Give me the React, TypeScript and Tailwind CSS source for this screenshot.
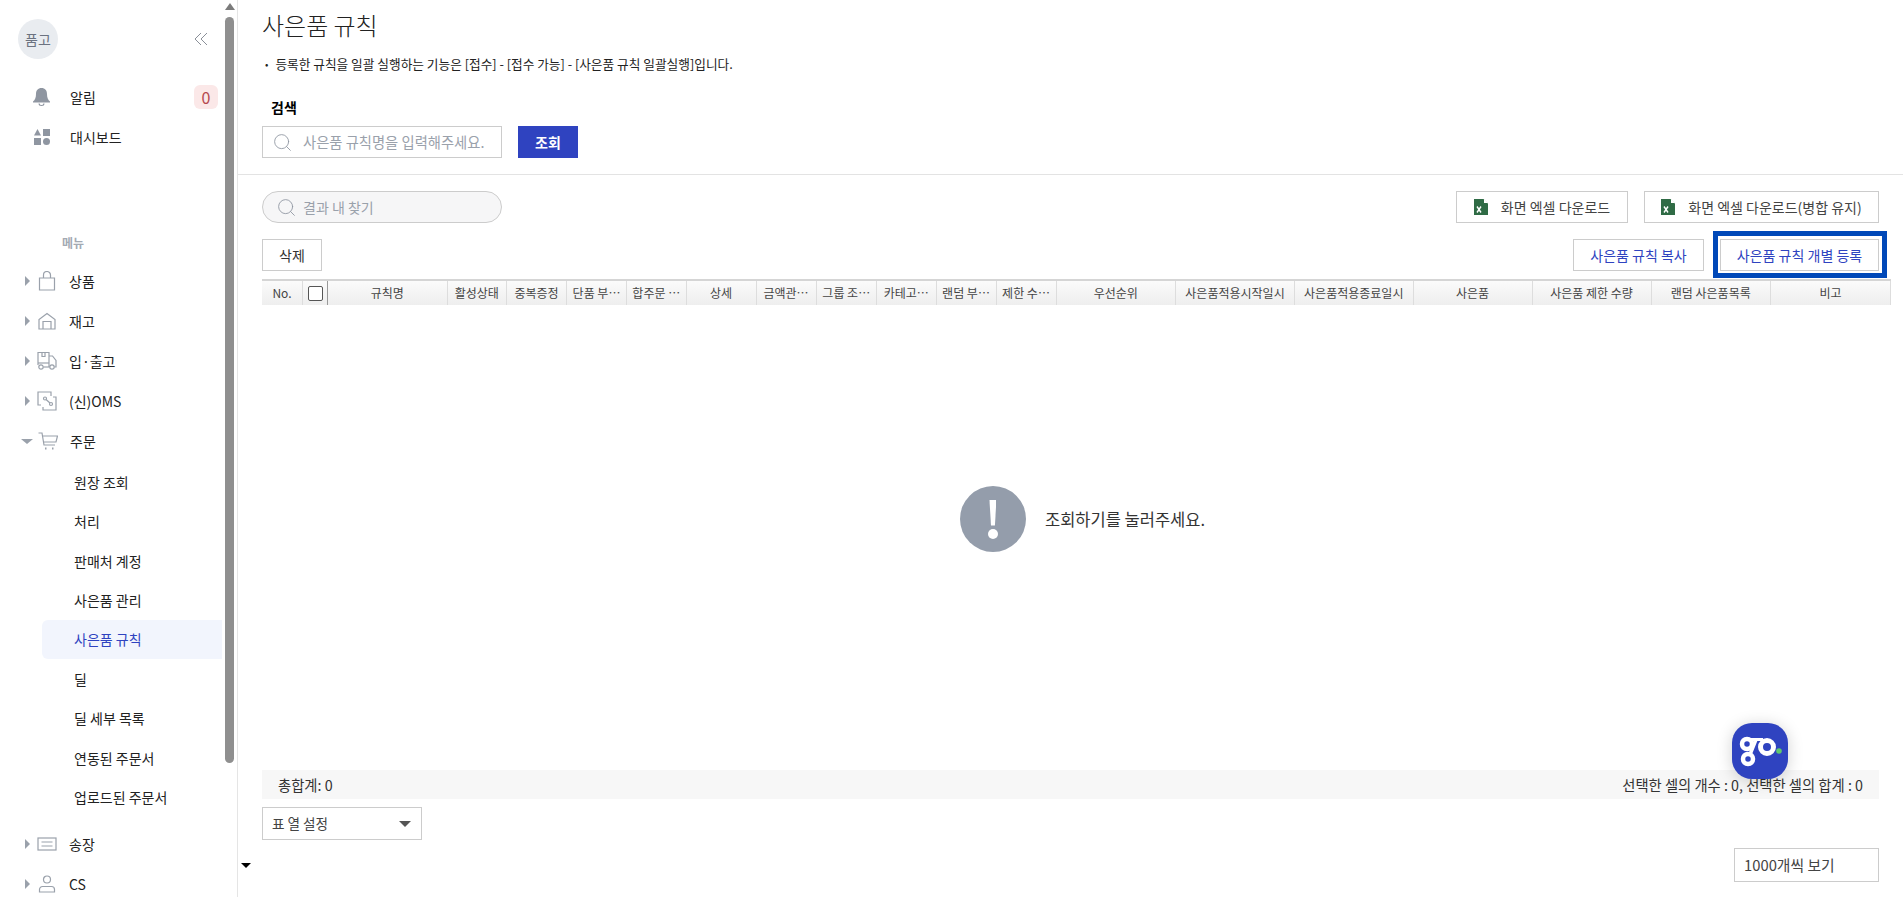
import type { ReactNode } from "react";
import { Search } from "lucide-react";

const font = "font-['Noto_Sans_CJK_KR','Noto_Sans',sans-serif]";

const columns = [
  { label: "No.", w: "w-[41px]" },
  { label: "", w: "w-[25px]", check: true },
  { label: "규칙명", w: "w-[119.5px]" },
  { label: "활성상태", w: "w-[59.5px]" },
  { label: "중복증정", w: "w-[60px]" },
  { label: "단품 부…", w: "w-[60px]" },
  { label: "합주문 …", w: "w-[59.5px]" },
  { label: "상세", w: "w-[70px]" },
  { label: "금액관…", w: "w-[60px]" },
  { label: "그룹 조…", w: "w-[60.5px]" },
  { label: "카테고…", w: "w-[59.5px]" },
  { label: "랜덤 부…", w: "w-[60px]" },
  { label: "제한 수…", w: "w-[60px]" },
  { label: "우선순위", w: "w-[119.5px]" },
  { label: "사은품적용시작일시", w: "w-[119px]" },
  { label: "사은품적용종료일시", w: "w-[118.5px]" },
  { label: "사은품", w: "w-[119px]" },
  { label: "사은품 제한 수량", w: "w-[119px]" },
  { label: "랜덤 사은품목록", w: "w-[119.5px]" },
  { label: "비고", w: "w-[120px]" },
];

const subItems = ["원장 조회", "처리", "판매처 계정", "사은품 관리", "사은품 규칙", "딜", "딜 세부 목록", "연동된 주문서", "업로드된 주문서"];

function Caret({ open }: { open?: boolean }) {
  if (open) {
    return <span className="w-0 h-0 border-x-[6px] border-x-transparent border-t-[5px] border-t-[#9aa1ab] ml-[21px] mr-[5px]" />;
  }
  return <span className="w-0 h-0 border-y-[5px] border-y-transparent border-l-[5px] border-l-[#9aa1ab] ml-[25px] mr-[7px]" />;
}

function IconBag() {
  return (
    <svg width="18" height="20" viewBox="0 0 18 20" fill="none" stroke="#9aa1ab" strokeWidth="1.2">
      <path d="M1.500 7h15v12h-15z" />
      <path d="M5.500 7V4a3.500 3.500 0 0 1 7 0v3" />
    </svg>
  );
}

function IconWarehouse() {
  return (
    <svg width="18" height="18" viewBox="0 0 18 18" fill="none" stroke="#9aa1ab" strokeWidth="1.2">
      <path d="M1 17V7.500L9 1.500l8 6V17z" />
      <path d="M5 17V9.500h8V17" />
    </svg>
  );
}

function IconTruck() {
  return (
    <svg width="20" height="20" viewBox="0 0 20 20" fill="none" stroke="#9aa1ab" strokeWidth="1.2">
      <path d="M1 14V1.500h11V16" />
      <path d="M5 1.500v4h3v-4" />
      <path d="M12 5h3.500l3.500 4.500V16h-1.500" />
      <path d="M1 12h11" />
      <circle cx="4" cy="16" r="2.200" />
      <circle cx="15" cy="16" r="2.200" />
      <path d="M6.500 16h6" />
    </svg>
  );
}

function IconOms() {
  return (
    <svg width="20" height="20" viewBox="0 0 20 20" fill="none" stroke="#9aa1ab" strokeWidth="1.2">
      <path d="M4 14H1V1h13v4" />
      <path d="M16 6h3v13H6v-3" />
      <circle cx="8" cy="7.500" r="1.500" />
      <circle cx="14" cy="13" r="1.500" />
      <path d="M9 8.500l4 3.500" />
    </svg>
  );
}

function IconCart() {
  return (
    <svg width="20" height="19" viewBox="0 0 20 19" fill="none" stroke="#9aa1ab" strokeWidth="1.2">
      <path d="M0.500 1h3.500l2 12h11" />
      <path d="M4.500 4h15l-1.500 6H5.500" />
      <path d="M7 16.500h1.500M14 16.500h1.500" strokeWidth="2" />
    </svg>
  );
}

function IconList() {
  return (
    <svg width="20" height="14" viewBox="0 0 20 14" fill="none" stroke="#9aa1ab" strokeWidth="1.2">
      <rect x="1" y="1" width="18" height="12" />
      <path d="M4.500 5h11M4.500 9h11" />
    </svg>
  );
}

function IconUser() {
  return (
    <svg width="18" height="18" viewBox="0 0 18 18" fill="none" stroke="#9aa1ab" strokeWidth="1.2">
      <circle cx="9" cy="4.500" r="3.500" />
      <path d="M1.500 17v-2.500a3 3 0 0 1 3-3h9a3 3 0 0 1 3 3V17z" />
    </svg>
  );
}

function MenuRow({ icon, label, open }: { icon: ReactNode; label: string; open?: boolean }) {
  return (
    <div className="h-10 flex items-center text-sm text-[#222]">
      <Caret open={open} />
      <span className="w-5 flex justify-center">{icon}</span>
      <span className="ml-3">{label}</span>
    </div>
  );
}

function ExcelIcon() {
  return (
    <svg width="14" height="16" viewBox="0 0 14 16">
      <path d="M0 0h9.500L14 4.500V16H0z" fill="#2f6b45" />
      <path d="M10 0l4 4h-4z" fill="#fff" />
      <path d="M3 7.500l4 6M7 7.500l-4 6" stroke="#fff" strokeWidth="1.400" />
    </svg>
  );
}

function GoLogo() {
  return (
    <svg width="56" height="56" viewBox="0 0 56 56" fill="none">
      <path d="M15 16.500H31" stroke="#fff" strokeWidth="3" />
      <path d="M17 34L24 16.500" stroke="#fff" strokeWidth="3.500" />
      <circle cx="15" cy="21" r="5" stroke="#fff" strokeWidth="4.500" fill="#2f43c0" />
      <circle cx="16" cy="36" r="5" stroke="#fff" strokeWidth="4.500" fill="#2f43c0" />
      <circle cx="35" cy="24" r="6.500" stroke="#fff" strokeWidth="5" fill="#2f43c0" />
      <circle cx="47" cy="28" r="2.800" fill="#5fc96b" />
    </svg>
  );
}

function Sidebar() {
  return (
    <aside className="relative w-[238px] h-full shrink-0 border-r border-[#e5e5e5] overflow-hidden">
      <div className="flex items-center justify-between pl-[18px] pr-[29px] pt-[19px]">
        <div className="w-10 h-10 rounded-full bg-[#e9ecf0] flex items-center justify-center text-sm text-[#6b7280]">품고</div>
        <svg width="14" height="14" viewBox="0 0 14 14" fill="none" stroke="#8a8f98" strokeWidth="1">
          <path d="M7 1L1 7l6 6M13 1L7 7l6 6" />
        </svg>
      </div>
      <div className="mt-[18px] pl-[33px] pr-[19px] h-10 flex items-center text-sm text-[#222]">
        <svg width="17" height="18" viewBox="0 0 17 18" fill="#8f96a1">
          <path d="M8.500 0C5 0 3 2.500 3 6c0 3.500-1 6-3 7.500V14.500h17v-1C15 12 14 9.500 14 6c0-3.500-2-6-5.500-6z" />
          <path d="M5.500 15.500a3 2.500 0 0 0 6 0h-1.200a1.800 1.500 0 0 1-3.600 0z" />
        </svg>
        <span className="ml-5 flex-1">알림</span>
        <span className="w-6 h-6 rounded-md bg-[#fbe8e8] text-[#b5474f] text-base flex items-center justify-center">0</span>
      </div>
      <div className="pl-[34px] h-10 flex items-center text-sm text-[#222]">
        <svg width="16" height="16" viewBox="0 0 16 16" fill="#8f96a1">
          <path d="M3.500 0L7 6.500H0z" />
          <rect x="9" y="0" width="7" height="7" />
          <rect x="0" y="9" width="7" height="7" />
          <circle cx="12.500" cy="12.500" r="3.500" />
        </svg>
        <span className="ml-5">대시보드</span>
      </div>
      <div className="mt-[76px] ml-[62px] text-xs font-bold text-[#a4aab3] leading-[20px]">메뉴</div>
      <div className="mt-2">
        <MenuRow icon={<IconBag />} label="상품" />
        <MenuRow icon={<IconWarehouse />} label="재고" />
        <MenuRow icon={<IconTruck />} label="입·출고" />
        <MenuRow icon={<IconOms />} label="(신)OMS" />
        <MenuRow icon={<IconCart />} label="주문" open />
      </div>
      <ul className="mt-[1px] ml-[42px] w-[180px]">
        {subItems.map((s) => (
          <li
            key={s}
            className={
              s === "사은품 규칙"
                ? "h-[39.450px] pl-8 flex items-center text-sm bg-[#f2f5fd] text-[#2f43c0] rounded-l-md"
                : "h-[39.450px] pl-8 flex items-center text-sm text-[#222]"
            }
          >
            {s}
          </li>
        ))}
      </ul>
      <div className="mt-[7.500px]">
        <MenuRow icon={<IconList />} label="송장" />
        <MenuRow icon={<IconUser />} label="CS" />
      </div>
      {/* scrollbar */}
      <span className="absolute left-[225px] top-[3px] w-0 h-0 border-x-[5px] border-x-transparent border-b-[7px] border-b-[#7b7b7b]" />
      <span className="absolute left-[225px] top-[17px] w-[9px] h-[746px] rounded-full bg-[#8f8f8f]" />
    </aside>
  );
}

function OutlineButton({ children, className }: { children: ReactNode; className: string }) {
  return <button className={"h-8 bg-white border border-[#ccc] flex items-center justify-center text-sm " + className}>{children}</button>;
}

export default function App() {
  return (
    <div className={"relative flex h-screen w-full overflow-hidden bg-white text-[#222] " + font}>
      <Sidebar />
      <main className="flex-1 min-w-0 flex flex-col">
        <div className="border-b border-[#e3e3e3] h-[175px] shrink-0 pl-6">
          <h1 className="text-2xl font-extralight leading-[50px] text-[#222]">사은품 규칙</h1>
          <p className="mt-[3px] pl-[3px] flex gap-[7px] text-[12.700px] leading-[22px] text-[#222]">
            <span className="text-[10px]">•</span>
            등록한 규칙을 일괄 실행하는 기능은 [접수] - [접수 가능] - [사은품 규칙 일괄실행]입니다.
          </p>
          <div className="mt-5 pl-[9px] text-sm font-bold leading-[24px] text-black">검색</div>
          <div className="mt-[7px] flex gap-4">
            <div className="w-60 h-8 border border-[#ccc] flex items-center pl-[9px] gap-[10px]">
              <Search size={21} strokeWidth={1} color="#8f96a1" />
              <span className="text-[14.300px] text-[#9aa1ab]">사은품 규칙명을 입력해주세요.</span>
            </div>
            <button className="w-[60px] h-8 bg-[#2f43c0] text-white text-sm font-bold">조회</button>
          </div>
        </div>
        <div className="flex-1 min-h-0 flex flex-col pl-6 pr-6">
          <div className="mt-4 flex items-center justify-between">
            <div className="w-60 h-8 rounded-full border border-[#ccc] bg-[#f6f6f7] flex items-center pl-[13px] gap-[6px]">
              <Search size={21} strokeWidth={1} color="#8f96a1" />
              <span className="text-sm text-[#9aa1ab]">결과 내 찾기</span>
            </div>
            <div className="flex gap-4">
              <OutlineButton className="w-[172px] gap-[13px] text-[#444]">
                <ExcelIcon />
                화면 엑셀 다운로드
              </OutlineButton>
              <OutlineButton className="w-[235px] gap-[13px] text-[#444]">
                <ExcelIcon />
                화면 엑셀 다운로드(병합 유지)
              </OutlineButton>
            </div>
          </div>
          <div className="mt-4 flex items-center justify-between">
            <OutlineButton className="w-[60px] text-[#333]">삭제</OutlineButton>
            <div className="relative flex gap-4">
              <OutlineButton className="w-[131px] text-[#2f43c0]">사은품 규칙 복사</OutlineButton>
              <OutlineButton className="w-[159px] text-[#2f43c0]">사은품 규칙 개별 등록</OutlineButton>
              <span className="absolute right-[-8px] top-[-8px] w-[174px] h-[47px] border-[5px] border-[#0048b8]" />
            </div>
          </div>
          <div className="mt-2 w-[1629px] shrink-0 h-[26px] flex border-t-2 border-[#d5d5d5] bg-gradient-to-b from-[#fbfbfb] to-[#eeeeee]">
            {columns.map((c, i) => (
              <div
                key={i}
                className={
                  "shrink-0 h-full flex items-center justify-center text-xs text-[#444] whitespace-nowrap " +
                  c.w +
                  (c.check ? " border-r border-[#999]" : " border-r border-[#dddddd]")
                }
              >
                {c.check ? <span className="w-[15px] h-[15px] rounded-[2px] border border-[#555] bg-white" /> : c.label}
              </div>
            ))}
          </div>
          <div className="flex-1 min-h-0 flex items-center justify-center gap-[19px] pb-[37px] pl-[24px]">
            <div className="w-[66px] h-[66px] rounded-full bg-[#949dab] flex flex-col items-center justify-center">
              <span className="w-[7px] h-[26px] bg-white [clip-path:polygon(0_0,100%_0,78%_100%,22%_100%)]" />
              <span className="mt-[3px] w-[10px] h-[10px] bg-white rounded-full" />
            </div>
            <span className="text-[16.500px] text-[#333]">조회하기를 눌러주세요.</span>
          </div>
          <div className="h-[29px] shrink-0 bg-[#f7f7f7] flex items-center justify-between pl-4 pr-4 text-[14.300px] text-[#333]">
            <span>총합계: 0</span>
            <span>선택한 셀의 개수 : 0, 선택한 셀의 합계 : 0</span>
          </div>
          <div className="mt-2 w-40 h-[33px] border border-[#ccc] flex items-center justify-between pl-[9px] pr-[10px] text-[13.600px] text-[#444]">
            표 열 설정
            <span className="w-0 h-0 border-x-[6px] border-x-transparent border-t-[6px] border-t-[#555]" />
          </div>
          <div className="mt-2 mb-[15px] self-end w-[145px] h-[34px] border border-[#ccc] flex items-center pl-[9px] text-[14.800px] text-[#444]">1000개씩 보기</div>
        </div>
      </main>
      {/* scrollbar's lower arrow and floating chat button */}
      <span className="absolute left-[241px] top-[863px] w-0 h-0 border-x-[5px] border-x-transparent border-t-[5px] border-t-black" />
      <div className="absolute left-[1732px] top-[723px] w-14 h-14 rounded-[20px] bg-[#2f43c0] shadow-[0_2px_16px_rgba(0,0,0,0.18)]">
        <GoLogo />
      </div>
    </div>
  );
}
